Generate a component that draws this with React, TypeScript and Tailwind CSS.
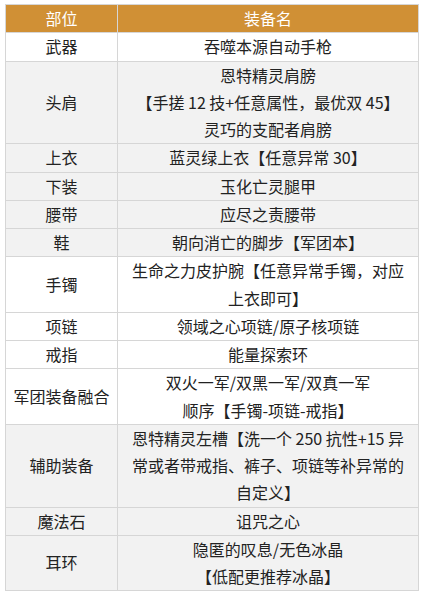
import React from 'react';

type Row = {
  slot: string;
  items: string[];
  shade: boolean;
};

const rows: Row[] = [
  { slot: '武器', items: ['吞噬本源自动手枪'], shade: false },
  {
    slot: '头肩',
    items: ['恩特精灵肩膀', '【手搓 12 技+任意属性，最优双 45】', '灵巧的支配者肩膀'],
    shade: true,
  },
  { slot: '上衣', items: ['蓝灵绿上衣【任意异常 30】'], shade: true },
  { slot: '下装', items: ['玉化亡灵腿甲'], shade: true },
  { slot: '腰带', items: ['应尽之责腰带'], shade: true },
  { slot: '鞋', items: ['朝向消亡的脚步【军团本】'], shade: true },
  { slot: '手镯', items: ['生命之力皮护腕【任意异常手镯，对应', '上衣即可】'], shade: false },
  { slot: '项链', items: ['领域之心项链/原子核项链'], shade: false },
  { slot: '戒指', items: ['能量探索环'], shade: false },
  { slot: '军团装备融合', items: ['双火一军/双黑一军/双真一军', '顺序【手镯-项链-戒指】'], shade: false },
  {
    slot: '辅助装备',
    items: ['恩特精灵左槽【洗一个 250 抗性+15 异', '常或者带戒指、裤子、项链等补异常的', '自定义】'],
    shade: true,
  },
  { slot: '魔法石', items: ['诅咒之心'], shade: true },
  { slot: '耳环', items: ['隐匿的叹息/无色冰晶', '【低配更推荐冰晶】'], shade: true },
];

const App: React.FC = () => {
  return (
    <div
      className="w-[425px] h-[595px] bg-white pl-[5px] pt-[4px]"
      style={{ fontFamily: '"Microsoft YaHei", "Noto Sans CJK SC", sans-serif' }}
    >
      <table className="w-[414px] table-fixed border-collapse text-[16px] leading-[27.25px] text-[#222]">
        <colgroup>
          <col className="w-[112px]" />
          <col />
        </colgroup>
        <thead>
          <tr className="bg-[#d09035] text-white">
            <th className="border border-[#d6d6d6] font-normal text-center">部位</th>
            <th className="border border-[#d6d6d6] font-normal text-center">装备名</th>
          </tr>
        </thead>
        <tbody>
          {rows.map((row) => (
            <tr key={row.slot} className={row.shade ? 'bg-[#f2f2f2]' : 'bg-white'}>
              <td className="border border-[#d6d6d6] text-center align-middle whitespace-nowrap">
                {row.slot}
              </td>
              <td className="border border-[#d6d6d6] text-center align-middle whitespace-nowrap">
                {row.items.map((line, i) => (
                  <div key={i}>{line}</div>
                ))}
              </td>
            </tr>
          ))}
        </tbody>
      </table>
    </div>
  );
};

export default App;
